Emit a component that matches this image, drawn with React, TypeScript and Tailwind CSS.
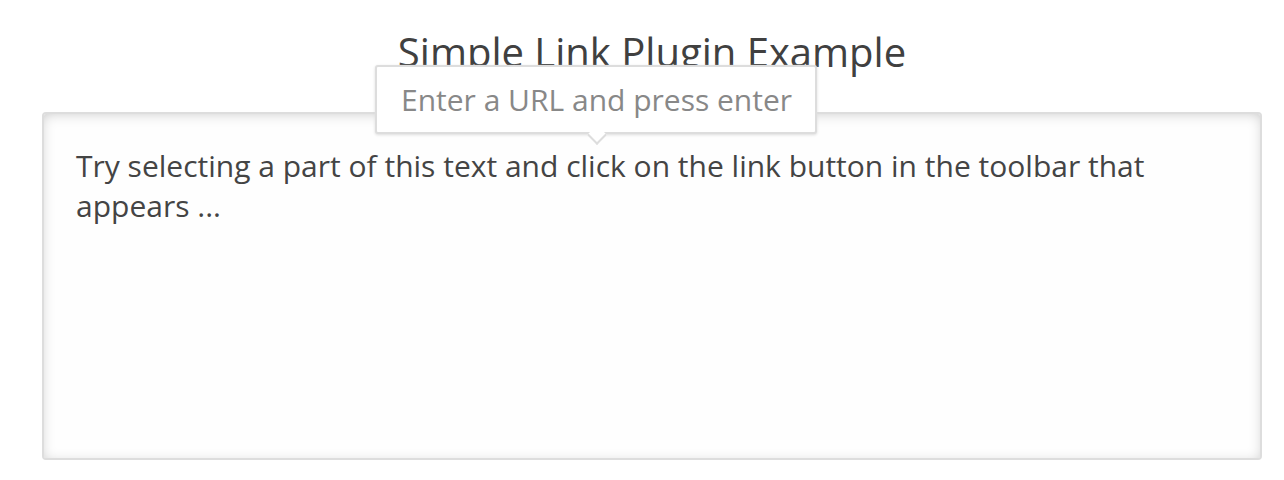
import React from "react";

export default function App() {
  return (
    <div className="w-[1284px] h-[480px] bg-white" style={{ fontFamily: '"Open Sans", sans-serif' }}>
      <div className="relative ml-[42px] w-[1220px] pt-[24px]">
        <h1 className="text-center text-[40px] leading-[56px] text-[#404040] font-medium">
          Simple Link Plugin Example
        </h1>
        <div className="mt-[32px] h-[348px] rounded-[4px] border-2 border-[#ddd] bg-[#fefefe] px-[32px] py-[32px] shadow-[inset_0px_2px_16px_-6px_#ababab]">
          <p className="text-[30px] leading-[40px] text-[#444]">
            Try selecting a part of this text and click on the link button in the toolbar that appears ...
          </p>
        </div>
        <div className="absolute left-[333px] top-[65px] w-[442px] h-[69px] rounded-[3px] border-2 border-[#ddd] bg-white shadow-[0_1px_3px_0_#dcdcdc] flex items-center pl-[24px]">
          <span className="whitespace-nowrap text-[30px] leading-[40px] text-[#888]">Enter a URL and press enter</span>
          <div className="absolute left-[213px] -bottom-[10px] w-[14px] h-[14px] rotate-45 bg-white border-r-2 border-b-2 border-[#ddd]" />
        </div>
      </div>
    </div>
  );
}
